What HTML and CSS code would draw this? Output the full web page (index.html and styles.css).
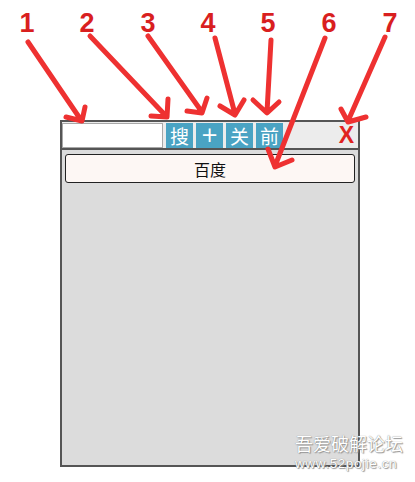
FILE: index.html
```html
<!DOCTYPE html>
<html lang="zh">
<head>
<meta charset="utf-8">
<link rel="stylesheet" href="styles.css">
</head>
<body>
<div class="app">
  <div class="toolbar">
    <input class="search" type="text">
    <button class="tb-btn">搜</button>
    <button class="tb-btn plus">+</button>
    <button class="tb-btn">关</button>
    <button class="tb-btn">前</button>
    <span class="close">X</span>
  </div>
  <div class="panel">
    <button class="site">百度</button>
  </div>
</div>

<div class="watermark">
  <div class="wm-cn">吾爱破解论坛</div>
  <div class="wm-url">www.52pojie.cn</div>
</div>

<svg class="notes" width="415" height="482" viewBox="0 0 415 482">
  <g class="num">
    <text x="27" y="32">1</text>
    <text x="87" y="32">2</text>
    <text x="148" y="32">3</text>
    <text x="208" y="32">4</text>
    <text x="268" y="32">5</text>
    <text x="329" y="32">6</text>
    <text x="390" y="32">7</text>
  </g>
  <g class="arrow">
    <path d="M28 42 L81 120 M85 107 L82 121 L66 117"/>
    <path d="M90 36 L166 116 M168 99 L167 117 L151 116"/>
    <path d="M148 36 L202 112 M207 98 L202 113 L187 111"/>
    <path d="M215 38 L235 114 M220 106 L235 115 L244 100"/>
    <path d="M271 40 L267 112 M253 100 L267 113 L279 102"/>
    <path d="M325 38 L275 166 M268 149 L275 167 L292 160"/>
    <path d="M385 37 L348 121 M341 109 L348 122 L366 117"/>
  </g>
</svg>
</body>
</html>
```

FILE: styles.css
```css
html, body {
  margin: 0;
  padding: 0;
  background: #ffffff;
  font-family: "Noto Sans CJK SC", "Liberation Sans", sans-serif;
}

body {
  position: relative;
  width: 415px;
  height: 482px;
  overflow: hidden;
}

.app {
  margin: 120px 0 0 60px;
  width: 300px;
}

.toolbar {
  display: flex;
  align-items: center;
  gap: 3px;
  height: 26px;
  border: 2px solid #555;
  background: #ececec;
}

.search {
  box-sizing: border-box;
  width: 101px;
  height: 25px;
  margin: 0;
  border: 1px solid #a8a8a8;
  background: #fff;
  padding: 0;
}

.tb-btn {
  box-sizing: border-box;
  width: 27px;
  height: 25px;
  margin: 0;
  padding: 0;
  border: none;
  background: #4aa3c3;
  color: #fff;
  font-family: "Noto Sans CJK SC", sans-serif;
  font-size: 19px;
  line-height: 25px;
}

.tb-btn.plus {
  font-family: "DejaVu Sans", sans-serif;
  font-size: 21px;
}

.close {
  margin-left: auto;
  margin-right: 4px;
  color: #e0231f;
  font-family: "Liberation Sans", sans-serif;
  font-weight: bold;
  font-size: 23px;
  line-height: 26px;
}

.panel {
  box-sizing: border-box;
  height: 317px;
  border: 2px solid #555;
  border-top: none;
  background: #dcdcdc;
  padding: 4px 3px;
}

.site {
  box-sizing: border-box;
  display: block;
  width: 100%;
  height: 29px;
  margin: 0;
  border: 1px solid #222;
  border-radius: 3px;
  background: #fdf7f4;
  color: #111;
  font-family: "Noto Sans CJK SC", sans-serif;
  font-size: 16px;
  padding: 0;
}

.watermark {
  position: absolute;
  left: 295px;
  top: 431px;
  white-space: nowrap;
  color: #fff;
  font-family: "Noto Sans CJK SC", sans-serif;
  text-shadow: 0 0 1px #777, 1px 1px 1px #999;
}

.wm-cn {
  font-size: 18px;
  line-height: 25px;
}

.wm-url {
  font-family: "Liberation Sans", sans-serif;
  font-size: 13.5px;
  line-height: 16px;
  letter-spacing: 0.6px;
}

.notes {
  position: absolute;
  left: 0;
  top: 0;
  pointer-events: none;
}

.num text {
  fill: #d91f1f;
  font-family: "Liberation Sans", sans-serif;
  font-size: 27px;
  font-weight: bold;
  text-anchor: middle;
}

.arrow path {
  fill: none;
  stroke: #ee3131;
  stroke-width: 5;
  stroke-linecap: round;
  stroke-linejoin: round;
}
```
